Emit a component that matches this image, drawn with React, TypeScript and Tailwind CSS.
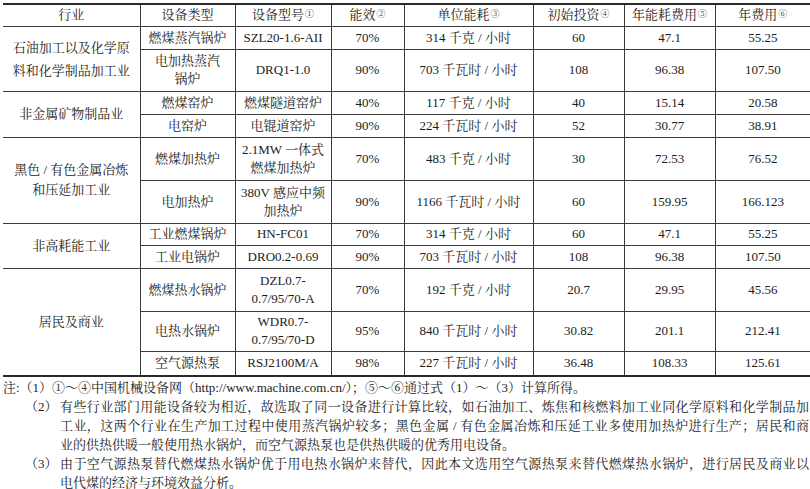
import React from "react";

type Row = {
  h: number;
  type: React.ReactNode;
  model: React.ReactNode;
  eff: string;
  unit: string;
  inv: string;
  energy: string;
  total: string;
  industry?: { text: React.ReactNode; span: number; leading: string };
};

const rows: Row[] = [
  { h: 23, type: "燃煤蒸汽锅炉", model: "SZL20-1.6-AII", eff: "70%", unit: "314 千克 / 小时", inv: "60", energy: "47.1", total: "55.25",
    industry: { text: (<>石油加工以及化学原<br />料和化学制品加工业</>), span: 2, leading: "leading-[23px]" } },
  { h: 42, type: (<>电加热蒸汽<br />锅炉</>), model: "DRQ1-1.0", eff: "90%", unit: "703 千瓦时 / 小时", inv: "108", energy: "96.38", total: "107.50" },
  { h: 23, type: "燃煤窑炉", model: "燃煤隧道窑炉", eff: "40%", unit: "117 千克 / 小时", inv: "40", energy: "15.14", total: "20.58",
    industry: { text: "非金属矿物制品业", span: 2, leading: "leading-[20px]" } },
  { h: 23, type: "电窑炉", model: "电锟道窑炉", eff: "90%", unit: "224 千瓦时 / 小时", inv: "52", energy: "30.77", total: "38.91" },
  { h: 43, type: "燃煤加热炉", model: (<>2.1MW 一体式<br />燃煤加热炉</>), eff: "70%", unit: "483 千克 / 小时", inv: "30", energy: "72.53", total: "76.52",
    industry: { text: (<>黑色 / 有色金属冶炼<br />和压延加工业</>), span: 2, leading: "leading-[20px]" } },
  { h: 43, type: "电加热炉", model: (<>380V 感应中频<br />加热炉</>), eff: "90%", unit: "1166 千瓦时 / 小时", inv: "60", energy: "159.95", total: "166.123" },
  { h: 22, type: "工业燃煤锅炉", model: "HN-FC01", eff: "70%", unit: "314 千克 / 小时", inv: "60", energy: "47.1", total: "55.25",
    industry: { text: "非高耗能工业", span: 2, leading: "leading-[20px]" } },
  { h: 23, type: "工业电锅炉", model: "DRO0.2-0.69", eff: "90%", unit: "703 千瓦时 / 小时", inv: "108", energy: "96.38", total: "107.50" },
  { h: 43, type: "燃煤热水锅炉", model: (<>DZL0.7-<br />0.7/95/70-A</>), eff: "70%", unit: "192 千克 / 小时", inv: "20.7", energy: "29.95", total: "45.56",
    industry: { text: "居民及商业", span: 3, leading: "leading-[20px]" } },
  { h: 40, type: "电热水锅炉", model: (<>WDR0.7-<br />0.7/95/70-D</>), eff: "95%", unit: "840 千瓦时 / 小时", inv: "30.82", energy: "201.1", total: "212.41" },
  { h: 25, type: "空气源热泵", model: "RSJ2100M/A", eff: "98%", unit: "227 千瓦时 / 小时", inv: "36.48", energy: "108.33", total: "125.61" },
];

const cell = "border-b border-r border-[#3a3a3a] text-center align-middle p-0";
const cellLast = "border-b border-[#3a3a3a] text-center align-middle p-0";

function Sup({ c }: { c: string }) {
  return <sup className="text-[9px] relative top-[-2px] ml-[1px]">{c}</sup>;
}

export default function App() {
  return (
    <div
      className="w-[810px] h-[489px] bg-white text-[#1c1c1c] overflow-hidden"
      style={{ fontFamily: '"Liberation Serif", "Noto Serif CJK SC", "Noto Sans CJK SC", serif' }}
    >
      <div className="pl-[3px] pt-[3px]">
        <table className="border-collapse table-fixed w-[807px] text-[13px] leading-[18px] border-t-2 border-b-2 border-[#2a2a2a]">
          <colgroup>
            <col className="w-[137px]" />
            <col className="w-[95px]" />
            <col className="w-[96px]" />
            <col className="w-[73px]" />
            <col className="w-[129px]" />
            <col className="w-[91px]" />
            <col className="w-[91px]" />
            <col className="w-[95px]" />
          </colgroup>
          <thead>
            <tr className="h-[22px]">
              <th className={`${cell} font-normal`}>行业</th>
              <th className={`${cell} font-normal`}>设备类型</th>
              <th className={`${cell} font-normal`}>设备型号<Sup c="①" /></th>
              <th className={`${cell} font-normal`}>能效<Sup c="②" /></th>
              <th className={`${cell} font-normal`}>单位能耗<Sup c="③" /></th>
              <th className={`${cell} font-normal`}>初始投资<Sup c="④" /></th>
              <th className={`${cell} font-normal`}>年能耗费用<Sup c="⑤" /></th>
              <th className={`${cellLast} font-normal`}>年费用<Sup c="⑥" /></th>
            </tr>
          </thead>
          <tbody>
            {rows.map((r, i) => (
              <tr key={i} style={{ height: r.h }}>
                {r.industry && (
                  <td rowSpan={r.industry.span} className={`${cell} ${r.industry.leading}`}>
                    {r.industry.text}
                  </td>
                )}
                <td className={cell}>{r.type}</td>
                <td className={cell}>{r.model}</td>
                <td className={cell}>{r.eff}</td>
                <td className={cell}>{r.unit}</td>
                <td className={cell}>{r.inv}</td>
                <td className={cell}>{r.energy}</td>
                <td className={cellLast}>{r.total}</td>
              </tr>
            ))}
          </tbody>
        </table>
      </div>
      <div className="text-[13px] leading-[19px] mt-[1px] pl-[3px] pr-[1px]">
        <div className="whitespace-nowrap">注:（1）①～④中国机械设备网（http://www.machine.com.cn/）；⑤～⑥通过式（1）～（3）计算所得。</div>
        <div className="flex ml-[22px]">
          <span className="w-[35px] shrink-0 whitespace-nowrap">（2）</span>
          <div className="flex-1 min-w-0">
            <div className="text-justify [text-align-last:justify]">有些行业部门用能设备较为相近，故选取了同一设备进行计算比较，如石油加工、炼焦和核燃料加工业同化学原料和化学制品加</div>
            <div className="text-justify [text-align-last:justify]">工业，这两个行业在生产加工过程中使用蒸汽锅炉较多；黑色金属 / 有色金属冶炼和压延工业多使用加热炉进行生产；居民和商</div>
            <div className="whitespace-nowrap">业的供热供暖一般使用热水锅炉，而空气源热泵也是供热供暖的优秀用电设备。</div>
          </div>
        </div>
        <div className="flex ml-[22px]">
          <span className="w-[35px] shrink-0 whitespace-nowrap">（3）</span>
          <div className="flex-1 min-w-0">
            <div className="text-justify [text-align-last:justify]">由于空气源热泵替代燃煤热水锅炉优于用电热水锅炉来替代，因此本文选用空气源热泵来替代燃煤热水锅炉，进行居民及商业以</div>
            <div className="whitespace-nowrap">电代煤的经济与环境效益分析。</div>
          </div>
        </div>
      </div>
    </div>
  );
}
